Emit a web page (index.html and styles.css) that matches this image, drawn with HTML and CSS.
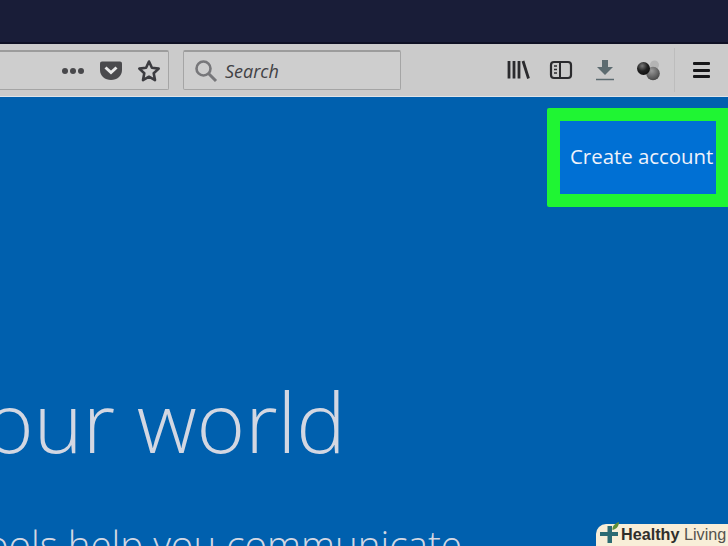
FILE: index.html
```html
<!DOCTYPE html>
<html lang="en">
<head>
<meta charset="utf-8">
<title>Create account</title>
<link rel="stylesheet" href="styles.css">
</head>
<body>
<div class="titlebar"></div>
<div class="toolbar">
  <div class="urlbar">
    <span class="dots"><i></i><i></i><i></i></span>
    <svg class="pocket" width="24" height="20" viewBox="0 0 24 20"><path d="M1 2.500C1 1.400 1.900 .5 3 .5h18c1.100 0 2 .9 2 2V9c0 6-5 10-11 10S1 15 1 9z" fill="#4a4a4d"/><path d="M6.500 6.500 12 11.500l5.500-5" fill="none" stroke="#e8e8e8" stroke-width="3"/></svg>
    <svg class="star" width="24" height="24" viewBox="0 0 24 24"><path d="M12 2.500l2.900 6.300 6.800.8-5 4.700 1.300 6.800-6-3.400-6 3.400 1.300-6.800-5-4.700 6.800-.8z" fill="none" stroke="#3c3c40" stroke-width="2.600" stroke-linejoin="round"/></svg>
  </div>
  <div class="searchbar">
    <svg width="24" height="24" viewBox="0 0 24 24"><circle cx="9.500" cy="9.500" r="7" fill="none" stroke="#77777a" stroke-width="2.600"/><path d="M14.500 14.500l7.500 7.500" stroke="#77777a" stroke-width="3"/></svg>
    <span class="search-text">Search</span>
  </div>
  <div class="tools">
    <svg class="library" width="23" height="20" viewBox="0 0 23 20"><path d="M2 1v17.500M7 1v17.500M12 1v17.500M16 1l5.500 17.500" fill="none" stroke="#2b2b2e" stroke-width="2.800"/></svg>
    <svg class="sidebar" width="24" height="20" viewBox="0 0 24 20"><rect x="2" y="2" width="20" height="16" rx="3" fill="none" stroke="#2b2b2e" stroke-width="2.200"/><path d="M11 2v16" stroke="#2b2b2e" stroke-width="2"/><path d="M5 6h3M5 9.500h3M5 13h3" stroke="#2b2b2e" stroke-width="1.600"/></svg>
    <svg class="download" width="20" height="24" viewBox="0 0 20 24"><path d="M7 1h6v7h5l-8 8-8-8h5z" fill="#5c6b70"/><path d="M1 20.500h18" stroke="#5c6b70" stroke-width="1.500"/></svg>
    <svg class="avatar" width="24" height="22" viewBox="0 0 24 22"><defs><radialGradient id="a" cx=".4" cy=".3" r=".8"><stop offset="0" stop-color="#777"/><stop offset=".5" stop-color="#222"/><stop offset="1" stop-color="#0a0a0a"/></radialGradient><radialGradient id="b" cx=".4" cy=".3" r=".8"><stop offset="0" stop-color="#9a9a9a"/><stop offset="1" stop-color="#3c3c3c"/></radialGradient></defs><circle cx="18.500" cy="6" r="4.500" fill="#b4b4b4"/><circle cx="17" cy="14.500" r="6.800" fill="url(#b)"/><circle cx="7.500" cy="9.500" r="6.500" fill="url(#a)"/></svg>
    <span class="divider"></span>
    <span class="menu"><i></i><i></i><i></i></span>
  </div>
</div>
<main class="page">
  <div class="actions">
    <div class="highlight"><a class="create" href="#">Create account</a></div>
  </div>
  <h1 class="headline">your world</h1>
  <p class="subline">tools help you communicate</p>
  <div class="badge">
    <svg class="badge-logo" width="22" height="22" viewBox="0 0 22 22"><path d="M2 10h7.500V4h4.500v6H20v4h-6v7H9.500v-7H2z" fill="#2c6b73"/><path d="M14.500 8C14 4 17 1.500 21 0c0 3.500-2 7-6.500 8z" fill="#5f8f3a"/></svg>
    <span class="brand"><b>Healthy</b> Living</span>
  </div>
</main>
</body>
</html>
```
FILE: styles.css
```css
* { box-sizing: border-box; }
html, body { margin: 0; height: 100%; }
body {
  width: 728px;
  height: 546px;
  overflow: hidden;
  display: flex;
  flex-direction: column;
  background: #0060ae;
  font-family: "Open Sans", sans-serif;
}
.titlebar { height: 44px; flex: none; background: #191d38; border-bottom: 2px solid #0e1024; }
.toolbar {
  height: 53px;
  flex: none;
  display: flex;
  align-items: flex-start;
  padding-top: 6px;
  background: #cbcbcb;
  border-bottom: 1px solid #dfe3e8;
}
.urlbar {
  width: 169px;
  height: 40px;
  flex: none;
  display: flex;
  align-items: center;
  justify-content: flex-end;
  padding-right: 7px;
  background: #cecece;
  border: 1px solid #a5a5a5;
  border-top: 2px solid #9c9c9c;
  border-left: 0;
  border-radius: 0 2px 2px 0;
}
.dots { display: flex; gap: 2px; margin-right: 15px; }
.dots i { width: 6px; height: 6px; border-radius: 50%; background: #48484b; }
.pocket { margin-right: 14px; }
.star { display: block; }
.searchbar {
  width: 218px;
  height: 40px;
  flex: none;
  margin-left: 14px;
  display: flex;
  align-items: center;
  gap: 7px;
  padding-left: 10px;
  background: #cecece;
  border: 1px solid #a5a5a5;
  border-top: 2px solid #9c9c9c;
  border-radius: 2px;
}
.search-text {
  font-style: italic;
  font-size: 18px;
  color: #414144;
}
.tools {
  flex: 1;
  height: 40px;
  display: flex;
  align-items: center;
  padding-left: 106px;
}
.library, .sidebar, .download, .avatar { flex: none; }
.library { margin-right: 19px; }
.sidebar { margin-right: 22px; }
.download { margin-right: 21px; margin-top: 1px; }
.avatar { margin-right: 14px; }
.divider { width: 1px; height: 44px; background: #bdbdbd; margin-right: 18px; flex: none; }
.menu { display: flex; flex-direction: column; gap: 3.5px; }
.menu i { width: 17px; height: 3px; background: #161618; border-radius: 1px; }
.page { flex: 1; position: relative; overflow: hidden; color: #d3d7e2; }
.actions { display: flex; justify-content: flex-end; padding-top: 11px; }
.highlight {
  width: 181px;
  height: 99px;
  border: 13px solid #1ff533;
  border-right-width: 12px;
  border-radius: 2px 0 0 2px;
  background: #0070d4;
}
.create {
  display: flex;
  height: 100%;
  align-items: center;
  padding-left: 10px;
  padding-bottom: 4px;
  font-size: 20.400px;
  white-space: nowrap;
  color: #eef2fb;
  text-decoration: none;
}
.headline {
  margin: 159px 0 0 -53px;
  font-size: 83px;
  line-height: 110px;
  font-weight: 300;
  white-space: nowrap;
}
.subline {
  margin: 43px 0 0 -27px;
  font-size: 38.500px;
  line-height: 50px;
  font-weight: 300;
  white-space: nowrap;
}
.badge {
  position: absolute;
  right: 0;
  bottom: 0;
  width: 132px;
  height: 22px;
  display: flex;
  align-items: center;
  padding: 0 0 2px 2px;
  background: #f8eed8;
  border-radius: 10px 0 0 0;
  font-family: "Liberation Sans", sans-serif;
  font-size: 16.200px;
  color: #55534e;
}
.badge-logo { flex: none; margin-right: 1px; margin-top: -2px; }
.brand { white-space: nowrap; }
.brand b { color: #2f2f2c; }
```
